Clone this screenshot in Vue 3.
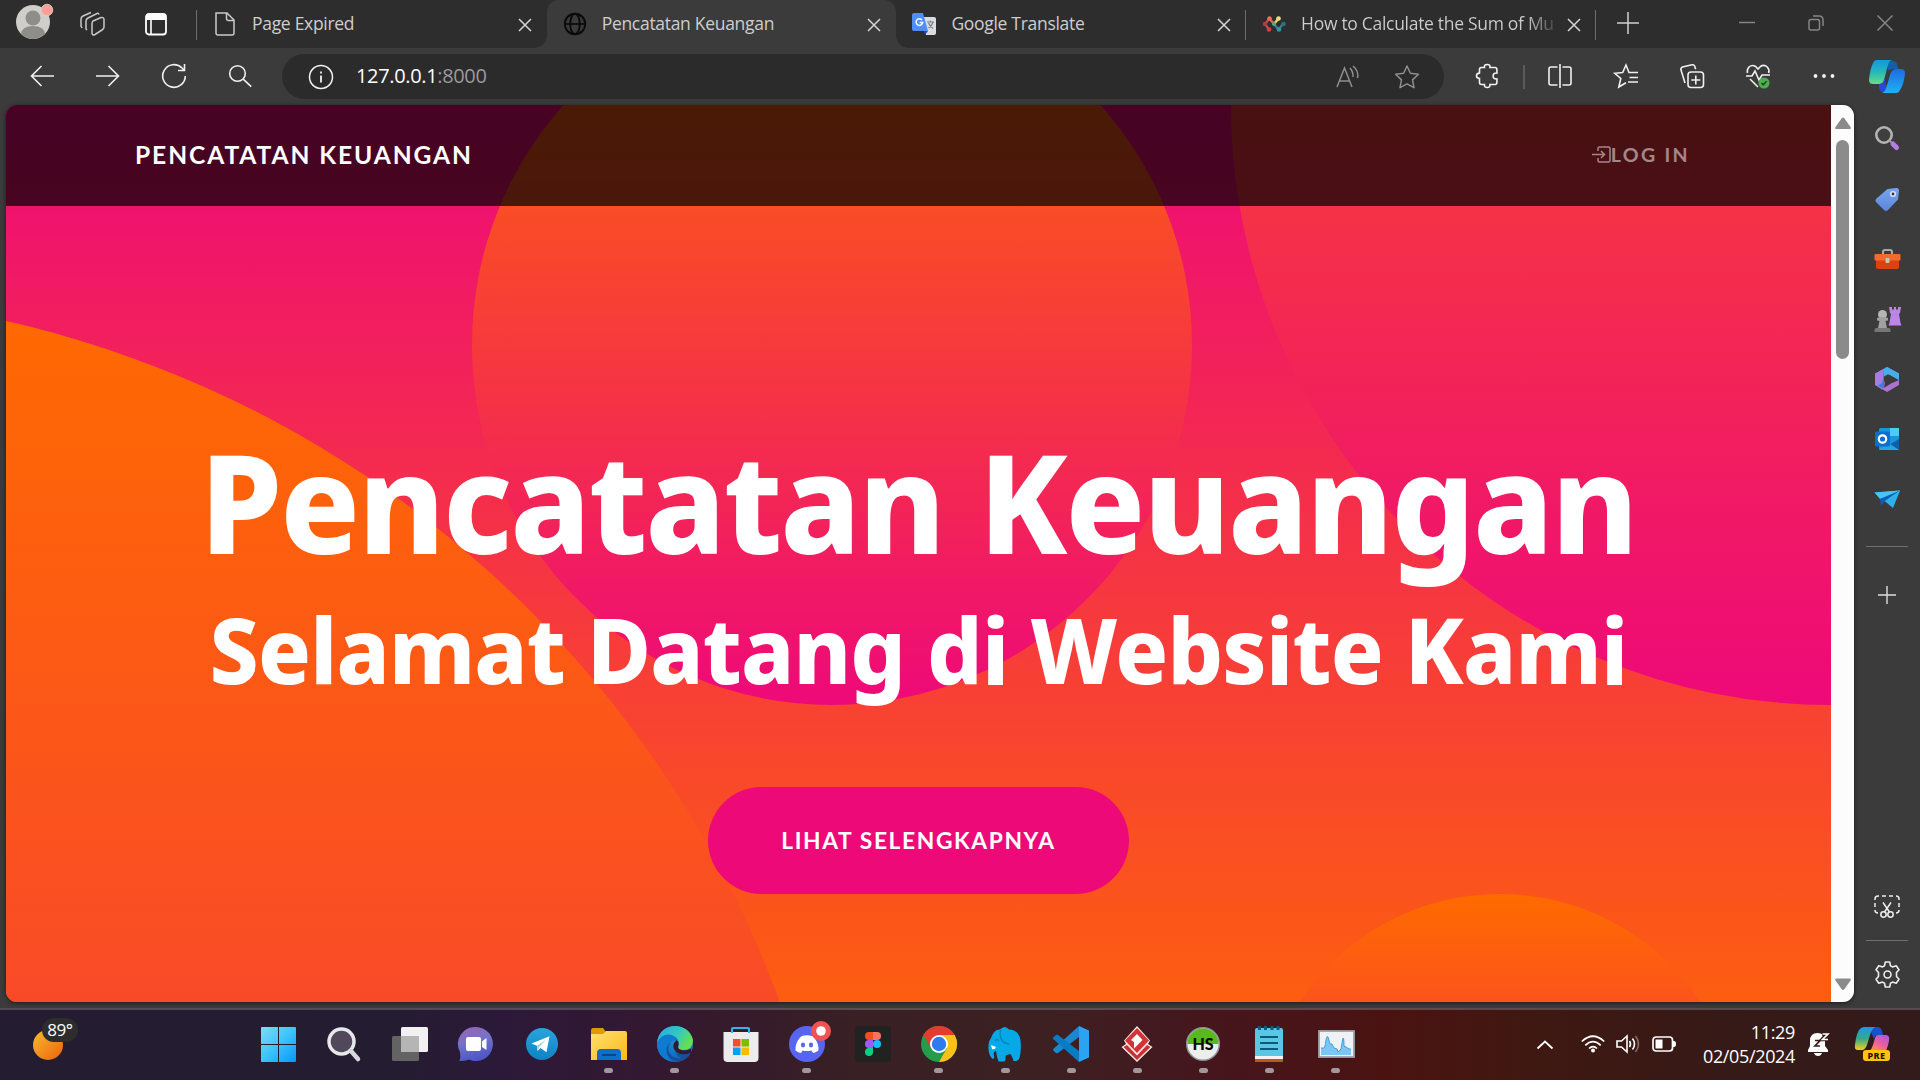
<script setup>
const tabs = [
  {
    title: 'Page Expired', active: false,
    icon: '<path d="M3 1h11l7 7v13q0 2-2 2H5q-2 0-2-2z M13.500 1v5.500q0 2 2 2H21" fill="none" stroke="#c9c9c9" stroke-width="1.500"/>'
  },
  {
    title: 'Pencatatan Keuangan', active: true,
    icon: '<g fill="none" stroke="#0a0a0a" stroke-width="1.900"><circle cx="12" cy="12" r="10.200"/><ellipse cx="12" cy="12" rx="4.800" ry="10.200"/><path d="M2 12h20" stroke-width="1.700"/></g>'
  },
  {
    title: 'Google Translate', active: false,
    icon: '<path d="M10 5h12q2 0 2 2v14q0 2-2 2H14z" fill="#dadce0"/><path d="M12 19h4l-3 4z" fill="#3445c9"/><path d="M2 1h9l5 18H2q-2 0-2-2V3q0-2 2-2z" fill="#4f8df7"/><path d="M10 8a3.300 3.300 0 1 0 .7 2.500H7.600" fill="none" stroke="#fff" stroke-width="1.500"/><path d="M15 10h7M18.300 8.500V10M21 10q-1 4-4.500 6M16.500 11q1 3 4.500 5.500" fill="none" stroke="#75808a" stroke-width="1.200"/>'
  },
  {
    title: 'How to Calculate the Sum of Mu', active: false,
    icon: '<path d="M7.500 6.500 3 12l4 5.500" fill="none" stroke="#c94a4a" stroke-width="2.200"/><path d="M7.500 6.500 12 12" stroke="#e8604f" stroke-width="2.500"/><path d="m12 12 4.500-5.500" stroke="#ead46c" stroke-width="2.500"/><path d="m12 12 4.500 5.500L21 12" fill="none" stroke="#36818f" stroke-width="2.200"/><g><circle cx="7.500" cy="6.500" r="2.300" fill="#ef6a5a"/><circle cx="3" cy="12" r="2.300" fill="#a93e46"/><circle cx="7" cy="17.500" r="2.300" fill="#cf4040"/><circle cx="12" cy="12" r="2" fill="#4eaa8d"/><circle cx="16.500" cy="6.500" r="2.300" fill="#f1de70"/><circle cx="17" cy="17.500" r="2.300" fill="#3295a6"/><circle cx="21.500" cy="12" r="2.300" fill="#2b6f80"/></g>'
  }
]

const navButtons = [
  '<path d="M24 12H1.500M11.500 2 1.500 12l10 10"/>',
  '<path d="M0 12h22.500M12.500 2l10 10-10 10"/>',
  '<path d="M23.300 12A11.300 11.300 0 1 1 20 4l2 2.200M22.500 0v6.500H16"/>',
  '<circle cx="9.500" cy="9.500" r="7.800"/><path d="m15.200 15.200 8 7.500"/>'
]

const toolButtons = [
  '<path d="M4.500 3.500h4q-.8-3 2.700-3t2.700 3h5q2 0 2 2v3.600q-3.800-.3-3.800 2.900t3.800 2.900v3.600q0 2-2 2h-5q.5 3-2.700 3t-2.700-3h-3q-2 0-2-2v-4q-3-.3-3-2.700t3-2.700V5.500q0-2 2-2z"/>',
  '<path d="M9.500 3H3Q1 3 1 5v14q0 2 2 2h6.500M14.500 3H21q2 0 2 2v14q0 2-2 2h-6.500M12 0v24"/>',
  '<path d="M24 8.500h-9L12 1 8.700 8.500.8 9.300l6 5.200-2 8.500L12 18.700M15.500 13.500H24M14 18h10"/>',
  '<rect x="8" y="8" width="15.500" height="15.500" rx="3"/><path d="M15.800 11.500v9M11.300 16h9M5 19 1 6q-.6-2 1.500-3L12 .8q2-.5 2.700 1.500l1 3"/>',
  '<path d="M1.500 9q-.8-3.500 1.500-6Q6 .3 9.600 2.500L12 5l2.400-2.500q3.800-2.400 6.800.5 2.500 2.500 1.500 6M0 12h6l3-5 4 9 3-5h8M4 15l8 8"/><circle cx="18" cy="19" r="5.500" fill="#4caf50" stroke="none"/><path d="m15.500 19 1.800 1.800 3.200-3.500" stroke="#1c3a1d" stroke-width="1.300"/>',
  '<g fill="#f2f2f2" stroke="none"><circle cx="3.500" cy="12" r="1.900"/><circle cx="12" cy="12" r="1.900"/><circle cx="20.500" cy="12" r="1.900"/></g>'
]

const sideApps = [
  '<circle cx="9" cy="9" r="7.700" fill="#3f3f3f" stroke="#b4b4b4" stroke-width="2.600"/><path d="m14.500 14.500 3 3" stroke="#999" stroke-width="2"/><path d="m18 18 3.500 3.500" stroke="#b77be6" stroke-width="5" stroke-linecap="round"/>',
  '<path d="m12.500 1 9-1q2.500 0 2.500 2.500l-1 9L13 22q-2 2-4 0l-7.500-7.500q-2-2 0-4z" fill="url(#tagBlue)"/><circle cx="18" cy="6" r="2.200" fill="#333" stroke="#dce7fb" stroke-width="1.600"/>',
  '<path d="M8 7V4q0-2 2-2h5q2 0 2 2v3" fill="none" stroke="#aaa" stroke-width="2"/><path d="M1 12h23v7q0 2-2 2H3q-2 0-2-2z" fill="#d9440e"/><rect x="-.5" y="6" width="26" height="6.500" rx="1" fill="#f26a2c"/><rect x="10.500" y="10" width="4" height="5" rx="1" fill="#c4c4c4"/>',
  '<path d="M14 0h3v2.500h2V0h2v2.500h2V0h3l-1 6-1 1 1.500 9 1 2.500H13.500l1-3 1.500-8.500-1-1z" fill="#bd84ea"/><circle cx="7.500" cy="7.500" r="4.500" fill="#b5b5b5"/><path d="M2 11q5.500-2 11 0v2.500l-2.500.5 1.500 7H3l1.500-7-2.500-.5z" fill="#a1a1a1"/><path d="M1.500 21h12q2 0 2 2v2h-16v-2q0-2 2-2z" fill="#777"/>',
  '<path d="M9 1.500 12 0l12 6.500V13L15 8l-5 5-1 9-2 .5L0 18V6.500z" fill="#a77be0"/><path d="M9 1.500 12 0l3 8-6 4.500V22l-3-1.500-3-2q5-2 5-7z" fill="#3c7ddc"/><path d="M12 0 24 6.500V13l-9-5-6 3.500V2z" fill="#46aee8"/><path d="M24 13v5l-12 7-5-3 9-5.500q4-2 8-3.500z" fill="#a974cf"/><path d="m9 9.500 4-2.300 4 2.300v5l-4 2.500-4-2.500z" fill="#3b3b3b"/>',
  '<rect x="4" y="1" width="20" height="22" rx="1.500" fill="#1796dd"/><path d="M15 1h9v8h-9z" fill="#4ccbf6"/><path d="m24 12-10 6 10 5z" fill="#115fa8"/><path d="M4 23h20L12 15z" fill="#22a7e3"/><rect x="0" y="4.500" width="15" height="15" rx="1.500" fill="#0a6fcf"/><circle cx="7.500" cy="12" r="3.700" fill="none" stroke="#fff" stroke-width="2.200"/>',
  '<path d="M-.5 5.500 25 3.500 17 20z" fill="#2aa9e8"/><path d="M-.5 5.500 25 3.500 5 12z" fill="#46c6f4"/><path d="m5 12 20-8.500L10 14l-4 4.500z" fill="#0c5fb5"/><path d="m10 14 15-10.500L18 21z" fill="#2fb0ec"/>'
]

const dockApps = [
  { run: false, art: '<g fill="url(#winBlue)"><path d="M1 2q0-1 1-1h16v17H1zM19 1h16q1 0 1 1v16H19zM1 19h17v17H2q-1 0-1-1zM19 19h17v16q0 1-1 1H19z"/></g>' },
  { run: false, art: '<circle cx="15.500" cy="15.500" r="12.500" fill="#51485c" stroke="#e6e8ea" stroke-width="3.500"/><path d="m25 25 7 8" stroke="#d5d8dd" stroke-width="4.500" stroke-linecap="round"/>' },
  { run: false, art: '<rect x="0" y="10" width="27" height="25" rx="1.500" fill="#636363"/><rect x="9" y="1" width="27" height="25" rx="1.500" fill="#f1f1f1"/><path d="M9 10h18v16H10q-1 0-1-1z" fill="#b5b5b5"/>' },
  { run: false, art: '<path d="M18 1a17 17 0 1 1-7 32.500Q7 35 1.500 35q1.500-4 .5-9A17 17 0 0 1 18 1z" fill="url(#chatViolet)"/><rect x="8" y="11" width="15" height="14" rx="2" fill="#fff"/><path d="m24 15.500 4.500-3.500v12L24 21z" fill="#fff"/>' },
  { run: false, art: '<circle cx="18" cy="18" r="16" fill="url(#telegramBlue)"/><path d="m7.500 17.500 18-7.200-3 16-6-4.300-3 3-.6-5.300z" fill="#fff"/><path d="m12.900 19.700 9.500-6.400-7.200 7.700-1.500 3.500z" fill="#a9cfe5"/>' },
  { run: true, art: '<path d="M0 5q0-3 2-3h10l3 4v8H0z" fill="#dc9a06"/><path d="M0 8h12l3-3h19q2 0 2 2v27H0z" fill="url(#folderYellow)"/><path d="M6 34V27q0-4 4-4h16q4 0 4 4v7z" fill="#0d6fc8"/><path d="M11 29h14" stroke="#0b4588" stroke-width="2"/>' },
  { run: true, art: '<circle cx="18" cy="18" r="18" fill="url(#edgeBlue)"/><path d="M0 17Q2 1 18 0q15 1 18 14 0 10-10 10-5 0-5-3 2-3 0-7Q16 6 0 17z" fill="url(#edgeGreen)"/><path d="M0 17Q4 8 12 8.500q6 .5 9 5.500-9-1-9.500 7 .5 10 10 12-5 2-9 2Q0 31 0 17z" fill="#0d7bd0"/><path d="M14 16q-6 8 1 14 6 4 13 1 4-2 6-5-3 8-12 9.500Q10 35 9.500 24q.5-5 4.500-8z" fill="#174e9d"/><path d="M19.500 14q3 2 1.700 6-1 4 6 4.500 4 0 7-2v4.500q-9 4-15-1-6-6 .3-12z" fill="#321a31"/><path d="M18 26q6 5 15 1l-4 5q-8 1-11-6z" fill="#174e9d"/>' },
  { run: false, art: '<path d="M9 8V3q0-1 1-1h15q1 0 1 1v5" fill="none" stroke="#35b4e8" stroke-width="2"/><path d="M.5 6h35v26q0 4-4 4h-27q-4 0-4-4z" fill="#ececec"/><path d="M9 2v5M26 2v5" stroke="#35b4e8" stroke-width="2"/><path d="M10 13h7.500v7.500H10z" fill="#f05023"/><path d="M18.500 13H26v7.500h-7.500z" fill="#7fbb00"/><path d="M10 21.500h7.500V29H10z" fill="#00a3ee"/><path d="M18.500 21.500H26V29h-7.500z" fill="#ffb900"/>' },
  { run: true, art: '<circle cx="18" cy="18" r="18" fill="#5865f2"/><path d="M13 10q5-1.500 10 0l2 1.500q5 6 4.500 13-3 2-5.500 2.500l-1.500-2.500q-4.500 1-9 0L12 27q-3-.5-5.500-2.500-.5-7 4.500-13z" fill="#fff"/><ellipse cx="14" cy="19" rx="2.100" ry="2.400" fill="#5865f2"/><ellipse cx="22" cy="19" rx="2.100" ry="2.400" fill="#5865f2"/><circle cx="32" cy="5" r="10" fill="#ef5455"/><circle cx="32" cy="5" r="4.800" fill="#fff"/>' },
  { run: false, art: '<rect x="0" y="0" width="36" height="36" rx="2" fill="#222"/><path d="M18 6h-4a4 4 0 0 0 0 8h4z" fill="#f24e1e"/><path d="M18 6h4a4 4 0 0 1 0 8h-4z" fill="#ff7262"/><path d="M18 14h-4a4 4 0 0 0 0 8h4z" fill="#a259ff"/><circle cx="22" cy="18" r="4" fill="#1abcfe"/><path d="M18 22h-4a4 4 0 1 0 4 4z" fill="#0acf83"/>' },
  { run: true, art: '<circle cx="18" cy="18" r="18" fill="#249c4a"/><path d="M2.400 9A18 18 0 0 1 33.600 9H18l-7.800 13.500z" fill="#e33b2e"/><path d="M33.600 9A18 18 0 0 1 18 36l7.800-13.500L18 9z" fill="#fbc116"/><circle cx="18" cy="18" r="9" fill="#fff"/><circle cx="18" cy="18" r="7.200" fill="#2e7bf0"/>' },
  { run: true, art: '<path d="M4 12Q7 3 13 3.500q5-5 9 0Q32 4 33.500 14q1 11-1 18-1 3.500-6 3-1.500-5-3-7-5 1-5 2 .5 4-1 5.500h-6Q9.500 30 9 25q-3 0-2 5 1 3.500-2 2.500Q1 28 1.500 19q0-4 2.500-7z" fill="#06a9e8"/><path d="M13.500 4q-2 13 9 14M8 15q2-3 4 0" fill="none" stroke="#0786be" stroke-width="1.500"/><path d="m4 19 5 2q-1 3-4 2z" fill="#fff"/>' },
  { run: true, art: '<path d="M26 0v11L5 27q-1 .6-2 0l-2.500-2.300q-1-1 0-2z" fill="#1c87d1"/><path d="M26 36V25L5 9Q4 8.400 3 9L.5 11.300q-1 1 0 2z" fill="#087bc2"/><path d="m26 0 10 4.500v27L26 36z" fill="#29a3f2"/>' },
  { run: true, art: '<path d="m18 0 13 14.500-2 3.500 4.500 3L18 36 2.500 21 7 18l-2-3.500z" fill="#f5e9e9"/><path d="m8 19 10 10.500L28 19l3.500 2L18 34 4.500 21z" fill="#ca2f32"/><path d="m18 2 12 12.500-12 12.500L6 14.500z" fill="#d23336"/><path d="m18 8 5.500 6-5.500 5.500-3 3v-6.500L12 14z" fill="#fff"/>' },
  { run: true, art: '<circle cx="18" cy="18" r="16.300" fill="#eceeec" stroke="#8b9295" stroke-width="1.500"/><path d="M2.500 18a15.500 15.500 0 0 1 31 0z" fill="#58b91e"/><text x="18" y="23.500" text-anchor="middle" font-family="Lato, sans-serif" font-weight="900" font-size="16" fill="#080808">HS</text>' },
  { run: true, art: '<path d="M4 30h28v6H4z" fill="#b65b14"/><path d="M4 29h28v4H4z" fill="#f2f2f2"/><path d="M4 4q0-2 2-2h24q2 0 2 2v26H4z" fill="#59c6e4"/><path d="M9 11h18M9 17h18M9 23h18" stroke="#0b5878" stroke-width="2"/><path d="M8.500 0v4M14.500 0v4M21 0v4M27 0v4" stroke="#0d5e7c" stroke-width="3"/>' },
  { run: true, art: '<rect x="1" y="5" width="35" height="26" fill="#eef1f5" stroke="#9ba2aa" stroke-width="1.800"/><path d="M3 22h3q1 0 2-8 1-5 2-3l2 7 2 0 2 4 3 1 1 3 3-3 2-11q1 0 1 8l2 1 3 2h2v6H3z" fill="#7cc6f5"/><path d="M3 22h3q1 0 2-8 1-5 2-3l2 7 2 0 2 4 3 1 1 3 3-3 2-11q1 0 1 8l2 1 3 2h2" fill="none" stroke="#3e9ed9" stroke-width="1"/>' }
]
</script>

<template>
  <div class="screen">
    <svg class="defs" width="0" height="0">
      <defs>
        <linearGradient id="tagBlue" x1="0" y1="0" x2="0" y2="1"><stop offset="0" stop-color="#78a4ee" /><stop offset="1" stop-color="#5b87dd" /></linearGradient>
        <linearGradient id="winBlue" gradientUnits="userSpaceOnUse" x1="0" y1="0" x2="36" y2="36"><stop offset="0" stop-color="#81dcfb" /><stop offset=".5" stop-color="#3fc4fb" /><stop offset="1" stop-color="#0996fa" /></linearGradient>
        <linearGradient id="chatViolet" x1="0" y1="0" x2=".3" y2="1"><stop offset="0" stop-color="#9b63b0" /><stop offset=".5" stop-color="#7573c9" /><stop offset="1" stop-color="#4f58c8" /></linearGradient>
        <linearGradient id="telegramBlue" x1="0" y1="0" x2="0" y2="1"><stop offset="0" stop-color="#2aa4dd" /><stop offset="1" stop-color="#0d83c3" /></linearGradient>
        <linearGradient id="folderYellow" x1="0" y1="0" x2="1" y2="1"><stop offset="0" stop-color="#fde073" /><stop offset="1" stop-color="#fdb916" /></linearGradient>
        <linearGradient id="edgeBlue" x1="0" y1="0" x2="0" y2="1"><stop offset="0" stop-color="#2ba0dc" /><stop offset="1" stop-color="#0a68bd" /></linearGradient>
        <linearGradient id="edgeGreen" x1="0" y1="0" x2="1" y2=".5"><stop offset="0" stop-color="#28a9e4" /><stop offset=".6" stop-color="#35c8c0" /><stop offset="1" stop-color="#66e04e" /></linearGradient>
        <linearGradient id="pilotLeft" x1="0" y1="0" x2="0" y2="1"><stop offset="0" stop-color="#1596dd" /><stop offset=".5" stop-color="#25b7bd" /><stop offset="1" stop-color="#68dc87" /></linearGradient>
        <linearGradient id="pilotRight" x1="0" y1="0" x2="0" y2="1"><stop offset="0" stop-color="#1e6be0" /><stop offset="1" stop-color="#1fb1f5" /></linearGradient>
        <linearGradient id="preLeft" x1="0" y1="0" x2="0" y2="1"><stop offset="0" stop-color="#1998ec" /><stop offset=".5" stop-color="#35a88c" /><stop offset="1" stop-color="#f0d021" /></linearGradient>
        <linearGradient id="preRight" x1="1" y1="0" x2=".3" y2="1"><stop offset="0" stop-color="#a656ee" /><stop offset=".6" stop-color="#ed5f9a" /><stop offset="1" stop-color="#fa8e5d" /></linearGradient>
        <linearGradient id="sunOrange" x1="0" y1="0" x2="1" y2="1"><stop offset="0" stop-color="#f7bb32" /><stop offset="1" stop-color="#ee610a" /></linearGradient>
      </defs>
    </svg>

    <header class="tabstrip">
      <div class="strip-tools">
        <svg class="avatar" width="38" height="38" viewBox="0 0 38 38">
          <circle cx="17" cy="20" r="17" fill="#d0cecb" />
          <circle cx="17" cy="16" r="7.500" fill="#8f8d89" />
          <path d="M5 32q1-8 12-8t12 8q-12 10-24 0z" fill="#8f8d89" />
          <circle cx="31" cy="8" r="5.800" fill="#ff9f97" stroke="#e0cecb" stroke-width=".8" />
        </svg>
        <svg class="workspaces" width="25" height="24" viewBox="0 0 25 24" fill="none" stroke="#c8c8c8" stroke-width="1.500">
          <path d="m13 9 8-3.500q3-.5 3 2V15q0 2-2 3l-7 4.500q-3 1.500-3-1.500v-9q0-2 1-3zM7 18l-1-1V9q0-2 2-3l9-4.500q1.500-.5 2 1M2 16l-1-2V7q0-2 2-3l8-3.500" />
        </svg>
        <svg class="vtabs" width="22" height="23" viewBox="0 0 22 23">
          <rect x="1" y="1" width="20" height="20.500" rx="3" fill="none" stroke="#fff" stroke-width="1.800" />
          <path d="M1 2h20v5H1z" fill="#fff" />
          <path d="M6 7v14" stroke="#fff" stroke-width="1.600" />
        </svg>
        <i class="rule"></i>
      </div>
      <div v-for="tab in tabs" :key="tab.title" class="tab" :class="{ active: tab.active }">
        <svg class="tab-icon" width="24" height="24" viewBox="0 0 24 24" v-html="tab.icon"></svg>
        <span class="tab-title">{{ tab.title }}</span>
        <svg class="tab-close" width="14" height="14" viewBox="0 0 14 14"><path d="m1 1 12 12M13 1 1 13" stroke="#d6d6d6" stroke-width="1.500" /></svg>
      </div>
      <svg class="new-tab" width="22" height="22" viewBox="0 0 22 22"><path d="M11 0v22M0 11h22" stroke="#d0d0d0" stroke-width="1.500" /></svg>
      <div class="window-buttons">
        <svg width="16" height="16" viewBox="0 0 16 16"><path d="M0 7.500h16" stroke="#858585" stroke-width="1.500" /></svg>
        <svg width="16" height="16" viewBox="0 0 16 16" fill="none" stroke="#858585" stroke-width="1.500"><rect x="1" y="4.500" width="10.500" height="10.500" rx="2" /><path d="M5 1h6q4 0 4 4v6" /></svg>
        <svg width="16" height="16" viewBox="0 0 16 16"><path d="m.5.500 15 15M15.500.500l-15 15" stroke="#858585" stroke-width="1.500" /></svg>
      </div>
    </header>

    <div class="toolbar">
      <div v-for="(art, i) in navButtons" :key="i" class="tool">
        <svg width="24" height="24" viewBox="0 0 24 24" v-html="art"></svg>
      </div>
      <div class="address">
        <svg class="info" width="26" height="26" viewBox="0 0 26 26" fill="none" stroke="#f2f2f2" stroke-width="1.500"><circle cx="13" cy="13" r="11.500" /><path d="M13 11.500v7M13 7.500v2" stroke-width="1.800" /></svg>
        <span class="url">127.0.0.1<em>:8000</em></span>
        <svg class="read" width="24" height="24" viewBox="0 0 24 24" fill="none" stroke="#8f8f8f" stroke-width="1.500"><path d="M1 22 8.500 3 16 22M3.500 16h10M14 3q3.500 4 3 9M17 1q6 5 4.500 12" /></svg>
        <svg class="star" width="26" height="26" viewBox="0 0 26 26" fill="none" stroke="#8f8f8f" stroke-width="1.500" stroke-linejoin="round"><path d="m13 2 3.400 7.300 8 1-5.900 5.600 1.500 7.800-7-3.800-7 3.800 1.500-7.800-5.900-5.600 8-1z" /></svg>
      </div>
      <div class="right-tools">
        <template v-for="(art, i) in toolButtons" :key="i">
          <div class="tool" :class="{ first: i === 0 }"><svg width="24" height="24" viewBox="0 0 24 24" v-html="art"></svg></div>
          <i v-if="i === 0" class="tool-rule"></i>
        </template>
        <svg class="copilot" width="36" height="33" viewBox="0 0 36 33">
          <path d="M23 1q4 0 5 3l1.500 5H24q-3 0-4 3l-3-10z" fill="#125fa5" />
          <path d="M8 0h15q-3 1-4 5l-4 15q-1 4-5 4H4q-4 0-4-4Q1 9 4 3q1-3 4-3z" fill="url(#pilotLeft)" />
          <path d="M10 24q4 0 5-4l1-2 1 9q1 5-3 5-3 0-4-4z" fill="#2a47d5" />
          <path d="M28 9h4q4 0 4 4-1 11-5 17-1 3-4 3H13q3-1 4-5l4-14q2-5 7-5z" fill="url(#pilotRight)" />
          <path d="m20 10-4 12 2 3 4-14z" fill="#3b3b3b" />
        </svg>
      </div>
    </div>

    <div class="workspace">
      <main class="page">
        <div class="viewport">
          <nav class="navbar">
            <a class="brand">Pencatatan Keuangan</a>
            <a class="login">
              <svg width="19" height="18" viewBox="0 0 19 18" fill="none" stroke="currentColor" stroke-width="1.500"><path d="M6 5V2.500Q6 1 7.500 1h9Q18 1 18 2.500v12q0 1.500-1.500 1.500h-9Q6 16 6 14.500V12M0 8.500h12.500M9 5l3.500 3.500L9 12" /></svg>Log In
            </a>
          </nav>
          <section class="masthead">
            <div class="circle c1"></div>
            <div class="circle c2"></div>
            <div class="circle c3"></div>
            <div class="circle c4"></div>
            <div class="hero">
              <h1>Pencatatan Keuangan</h1>
              <h2>Selamat Datang di Website Kami</h2>
              <a class="cta">Lihat Selengkapnya</a>
            </div>
          </section>
        </div>
        <div class="scrollbar">
          <svg width="16" height="13" viewBox="0 0 16 13"><path d="M6.500 1.500q1.500-2 3 0l6 8.500q1 2-1 2h-13q-2 0-1-2z" fill="#8b8b8b" /></svg>
          <div class="thumb"></div>
          <svg width="16" height="13" viewBox="0 0 16 13"><path d="M6.500 11q1.500 2 3 0l6-8.500q1-2-1-2h-13q-2 0-1 2z" fill="#8b8b8b" /></svg>
        </div>
      </main>
      <aside class="sidebar">
        <div v-for="(art, i) in sideApps" :key="i" class="side-app">
          <svg width="26" height="26" viewBox="0 0 26 26" v-html="art"></svg>
        </div>
        <i class="side-rule"></i>
        <svg class="side-plus" width="18" height="18" viewBox="0 0 18 18"><path d="M9 0v18M0 9h18" stroke="#dedede" stroke-width="1.400" /></svg>
        <svg class="snip" width="26" height="24" viewBox="0 0 26 24" fill="none" stroke="#ededed" stroke-width="1.500">
          <path d="M1 5V4q0-3 3-3h1M8 1h4M15 1h4M22 1q3 0 3 3v1M25 8v4M1 8v4M25 15q0 3-3 3M1 15q0 3 3 3" />
          <circle cx="9.500" cy="19.500" r="2.700" /><circle cx="16.500" cy="19.500" r="2.700" /><path d="M9 7.500 15.500 17M17 7.500 10.500 17" />
        </svg>
        <i class="side-rule second"></i>
        <svg class="gear" width="27" height="27" viewBox="0 0 27 27" fill="none" stroke="#ededed" stroke-width="1.600" stroke-linejoin="round">
          <path d="M11.300 1h4.400l.8 3.800 2 1.100 3.700-1.200 2.800 4-2.500 2.900v3.800l2.500 2.900-2.800 4-3.700-1.200-2 1.100-.8 3.800h-4.400l-.8-3.800-2-1.100-3.700 1.200-2.800-4 2.500-2.900v-3.800L2 8.700l2.800-4 3.700 1.200 2-1.100z" /><circle cx="13.500" cy="13.500" r="3.500" />
        </svg>
      </aside>
    </div>

    <footer class="taskbar">
      <div class="weather">
        <svg width="30" height="30" viewBox="0 0 30 30"><circle cx="15" cy="15" r="15" fill="url(#sunOrange)" /></svg>
        <span>89°</span>
      </div>
      <div class="dock">
        <div v-for="(app, i) in dockApps" :key="i" class="dock-app">
          <svg width="36" height="36" viewBox="0 0 36 36" v-html="app.art"></svg>
          <i v-if="app.run"></i>
        </div>
      </div>
      <div class="tray">
        <svg class="chev" width="16" height="9" viewBox="0 0 16 9" fill="none" stroke="#fff" stroke-width="1.800"><path d="m.5 8.500 7.500-7 7.500 7" /></svg>
        <svg class="wifi" width="24" height="18" viewBox="0 0 24 18" fill="none" stroke="#fff" stroke-width="1.700"><path d="M.8 6.500q11.200-10.500 22.400 0M4.300 10.300q7.700-7.300 15.400 0M8 13.500q4-4 8 0" /><circle cx="12" cy="15.500" r="2" fill="#fff" stroke="none" /></svg>
        <svg class="vol" width="24" height="20" viewBox="0 0 24 20" fill="none" stroke="#fff" stroke-width="1.600"><path d="M1 7h4.500L11 2v16l-5.500-5H1zM13.500 7q2 3 0 6M16.500 4.500q4 5.500 0 11" /><path d="M19.500 2q6 8 0 16" stroke="#8a6a66" /></svg>
        <svg class="batt" width="24" height="16" viewBox="0 0 24 16"><rect x="1" y="1" width="19.500" height="14" rx="3" fill="none" stroke="#fff" stroke-width="1.700" /><rect x="3.500" y="3.500" width="7" height="9" fill="#fff" /><path d="M21 5h1q2 0 2 3t-2 3h-1z" fill="#fff" /></svg>
        <div class="clock"><span>11:29</span><span>02/05/2024</span></div>
        <svg class="bell" width="21" height="24" viewBox="0 0 21 24"><path d="M9.500 1q7.500 0 7.500 8v5l3 4v2H0v-2l2-4V9q0-8 7.500-8z" fill="#fff" /><path d="M6 21h8q-1 3-4 3t-4-3z" fill="#fff" /><path d="M7 8.500h5l-5 5.500h5" fill="none" stroke="#3a1a17" stroke-width="1.700" /><path d="M14 2h5l-5 5.500h5" fill="none" stroke="#3a1a17" stroke-width="3.500" /><path d="M14.500 2H20l-5.500 5.500H20" fill="none" stroke="#fff" stroke-width="1.600" /></svg>
        <svg class="preview" width="36" height="36" viewBox="0 0 36 36">
          <path d="M8 1h14q4 0 5 4l1 4h-4q-4 0-5 4l-4-9z" fill="#1b4fc9" />
          <path d="M9 1h11q-3 2-4 5l-4 13q-2 5-5 5H3q-4 0-3-5Q1 9 4 4q2-3 5-3z" fill="url(#preLeft)" />
          <path d="M23 9h8q4 0 3 6-1 5-3 10H14q3-2 4-6l2-7q1-3 3-3z" fill="url(#preRight)" />
          <rect x="8" y="24" width="27" height="11" rx="3" fill="#ffc40c" />
          <text x="21.500" y="32.800" text-anchor="middle" font-family="Noto Sans, sans-serif" font-weight="800" font-size="9" letter-spacing=".5" fill="#1d1500">PRE</text>
        </svg>
      </div>
    </footer>
  </div>
</template>

<style>
html, body { margin: 0; background: #3b3b3b; overflow: hidden; }
</style>

<style scoped>
* { box-sizing: border-box; }
svg { display: block; flex: none; overflow: visible; }
.defs { position: absolute; }
.screen { width: 1920px; height: 1080px; display: flex; flex-direction: column; background: #3b3b3b; overflow: hidden; font-family: "Open Sans", "Noto Sans", sans-serif; }

.tabstrip { height: 48px; flex: none; display: flex; align-items: flex-start; background: #2d2d2d; }
.strip-tools { width: 197px; height: 48px; display: flex; align-items: center; padding-left: 16px; flex: none; }
.avatar { margin-top: -6px; }
.workspaces { margin-left: 26px; }
.vtabs { margin-left: 40px; }
.rule { width: 1px; height: 30px; margin-left: auto; background: #6d6d6d; margin-top: 2px; }
.tab { position: relative; width: 349.700px; height: 48px; flex: none; display: flex; align-items: center; padding: 0 15px 0 16px; }
.tab-icon { margin-right: 15px; }
.tab-title { flex: 1; white-space: nowrap; font-size: 17.500px; letter-spacing: -.3px; line-height: 46px; height: 48px; color: #cdcdcd; margin-right: 10px; }
.tab:nth-child(5) .tab-title { color: transparent; background: linear-gradient(90deg, #cdcdcd 225px, rgba(205, 205, 205, .1) 256px); -webkit-background-clip: text; background-clip: text; }
.tab-close { margin-top: 2px; }
.tab.active { background: #3b3b3b; border-radius: 12px 12px 0 0; }
.tab.active::before, .tab.active::after { content: ""; position: absolute; bottom: 0; width: 12px; height: 12px; }
.tab.active::before { left: -12px; background: radial-gradient(circle at 0 0, transparent 11.500px, #3b3b3b 12px); }
.tab.active::after { right: -12px; background: radial-gradient(circle at 100% 0, transparent 11.500px, #3b3b3b 12px); }
.tab:nth-child(4)::after, .tab:nth-child(5)::after { content: ""; position: absolute; right: 0; top: 10px; width: 1px; height: 30px; background: #6d6d6d; }
.new-tab { margin: 12px 0 0 21px; }
.window-buttons { margin: 15px 27px 0 auto; display: flex; gap: 53px; }

.toolbar { height: 57px; flex: none; display: flex; align-items: center; padding-left: 9px; }
.tool { width: 66px; height: 57px; padding-bottom: 1px; display: flex; align-items: center; justify-content: center; flex: none; }
.tool svg { fill: none; stroke: #f0f0f0; stroke-width: 1.600; }
.address { margin-left: 9px; width: 1162px; height: 45px; border-radius: 23px; background: #2b2b2b; display: flex; align-items: center; padding: 0 24px 0 26px; flex: none; }
.url { margin: -2px auto 0 22px; font-size: 20px; letter-spacing: -.35px; color: #fff; }
.url em { font-style: normal; color: #9a9a9a; }
.read { margin-right: 34px; }
.right-tools { display: flex; align-items: center; }
.tool.first { width: 48px; margin-left: 20px; }
.tool-rule { width: 2px; height: 24px; background: #5a5a5a; margin: 0 2px 0 11px; }
.copilot { margin-left: 12px; }

.workspace { height: 903px; flex: none; display: flex; }
.page { margin-left: 6px; width: 1848px; height: 897px; border-radius: 11px; overflow: hidden; display: flex; flex: none; box-shadow: 0 1px 4px rgba(0, 0, 0, .55); }
.viewport { position: relative; width: 1825px; height: 897px; overflow: hidden; flex: none; }
.navbar { position: absolute; z-index: 3; inset: 0 0 auto 0; height: 101px; background: rgba(0, 0, 0, .7); display: flex; align-items: center; justify-content: space-between; padding: 0 141px 2px 129px; font-family: Lato, sans-serif; font-weight: 700; text-transform: uppercase; letter-spacing: 2.300px; color: #fff; }
.brand { font-size: 24.600px; letter-spacing: 1.900px; }
.login { display: flex; align-items: center; font-size: 19.600px; color: rgba(255, 255, 255, .5); }
.masthead { position: relative; height: 1029px; overflow: hidden; background: linear-gradient(0deg, #ff6a00 0%, #ee0979 100%); }
.circle { position: absolute; border-radius: 50%; background: linear-gradient(0deg, #ee0979 0%, #ff6a00 100%); }
.c1 { width: 2160px; height: 2160px; bottom: -1320px; left: -1320px; }
.c2 { width: 1200px; height: 1200px; top: -600px; right: -600px; }
.c3 { width: 480px; height: 480px; bottom: -240px; right: 5%; }
.c4 { width: 720px; height: 720px; top: -120px; right: 35%; }
.hero { position: relative; z-index: 1; padding-top: 316px; display: flex; flex-direction: column; align-items: center; color: #fff; }
h1, h2 { margin: 0; font-family: "Noto Sans", sans-serif; font-weight: 800; white-space: nowrap; transform: scaleX(.96); }
h1 { font-size: 137px; line-height: 160px; letter-spacing: -2px; word-spacing: 3px; }
h2 { margin-top: 13px; font-size: 91px; line-height: 110px; letter-spacing: -.8px; }
.cta { margin-top: 83px; width: 421px; height: 107px; padding-bottom: 2px; border-radius: 54px; background: #ee0979; display: flex; align-items: center; justify-content: center; font-family: Lato, sans-serif; font-weight: 700; font-size: 22.800px; letter-spacing: 1.600px; text-transform: uppercase; }
.scrollbar { width: 23px; background: #fcfcfc; display: flex; flex-direction: column; align-items: center; padding: 12px 0 11px; }
.thumb { width: 13px; height: 219px; margin: 10px 0 auto; border-radius: 7px; background: #8b8b8b; }

.sidebar { width: 66px; display: flex; flex-direction: column; align-items: center; padding-top: 4px; }
.side-app { height: 60.200px; flex: none; display: flex; align-items: center; padding-left: 1px; }
.side-app:nth-child(2), .side-app:nth-child(3) { padding-top: 3px; }
.side-rule { width: 42px; height: 1px; flex: none; margin-top: 16px; background: #707070; }
.side-plus { margin-top: 39px; margin-right: 1px; }
.snip { margin-top: 291px; }
.side-rule.second { margin-top: 21px; }
.gear { margin-top: 20px; }

.taskbar { height: 72px; flex: none; display: flex; border-top: 2px solid rgba(120, 115, 120, .55); background: linear-gradient(90deg, #241c30 0, #241c31 400px, #2c1939 500px, #341830 660px, #382024 860px, #3d2022 1050px, #46151c 1230px, #4a1311 1390px, #3f1812 1540px, #351a17 1750px, #331b1c 1920px); color: #fff; }
.weather { position: relative; width: 245px; padding: 20px 0 0 33px; }
.weather span { position: absolute; left: 42px; top: 8px; width: 36px; height: 24px; border-radius: 12px; background: #2d2d2d; font-size: 17px; letter-spacing: -.4px; line-height: 23px; text-align: center; }
.dock { display: flex; }
.dock-app { width: 66.100px; padding-top: 16px; display: flex; flex-direction: column; align-items: center; }
.dock-app i { width: 9px; height: 5px; margin-top: 6px; border-radius: 3px; background: #a3979e; }
.tray { margin-left: auto; display: flex; align-items: center; height: 68px; padding-right: 29px; }
.wifi { margin-left: 28px; }
.vol { margin-left: 11px; }
.batt { margin-left: 12px; }
.clock { width: 119px; display: flex; flex-direction: column; text-align: right; font-size: 18px; letter-spacing: -.35px; line-height: 24px; padding-bottom: 1px; }
.bell { margin-left: 13px; }
.preview { margin-left: 26px; }
</style>
